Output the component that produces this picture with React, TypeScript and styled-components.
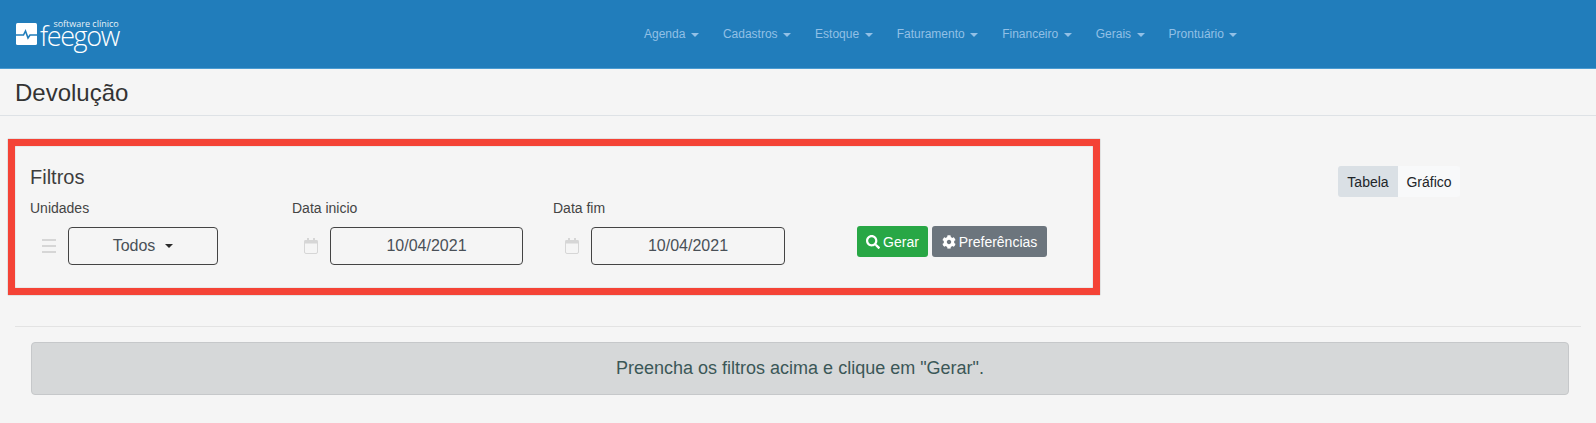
import React from "react";
import styled, { createGlobalStyle } from "styled-components";
import { FaSearch, FaCog } from "react-icons/fa";

const Global = createGlobalStyle`
  html, body { margin: 0; padding: 0; background: #f5f5f5; }
  body { font-family: "Liberation Sans", Arial, sans-serif; color: #333; overflow: hidden; }
  * { box-sizing: border-box; }
`;

const Page = styled.div`
  width: 1596px;
  height: 423px;
  background: #f5f5f5;
`;

const Header = styled.header`
  height: 69px;
  background: #217dbb;
  border-bottom: 1px solid #4a9bd1;
  display: flex;
  align-items: flex-start;
`;

const Logo = styled.div`
  width: 120px;
  margin: 18px 0 0 16px;
  display: flex;
  align-items: flex-start;
  color: #fff;
`;

const LogoWords = styled.div`
  margin: 2px 0 0 3px;
  display: flex;
  flex-direction: column;
  align-items: flex-end;
`;

const LogoTop = styled.span`
  font-family: "Open Sans", sans-serif;
  font-size: 9px;
  line-height: 8px;
  height: 8px;
  color: #e6f1f8;
  white-space: nowrap;
`;

const LogoName = styled.span`
  font-family: "Open Sans", sans-serif;
  font-weight: 300;
  font-size: 27px;
  line-height: 22px;
  height: 22px;
  margin-top: -3px;
  letter-spacing: -1.4px;
`;

const Nav = styled.nav`
  display: flex;
  margin-left: 496px;
  margin-top: 27px;
`;

const NavLink = styled.a`
  padding: 0 12px;
  font-size: 12px;
  line-height: 15px;
  color: #92c0e6;
  white-space: nowrap;
  display: flex;
  align-items: center;
`;

const Caret = styled.span<{ $size?: number; $gap?: number }>`
  display: inline-block;
  margin-left: ${(p) => p.$gap ?? 5.5}px;
  border-top: ${(p) => p.$size ?? 4}px solid currentColor;
  border-left: ${(p) => p.$size ?? 4}px solid transparent;
  border-right: ${(p) => p.$size ?? 4}px solid transparent;
`;

const SelectCaret = styled(Caret)`
  color: #2b2b2b;
`;

const TitleBar = styled.div`
  height: 47px;
  border-bottom: 1px solid #dee2e6;
  padding: 1px 0 0 15px;
  display: flex;
  align-items: center;
`;

const Title = styled.h1`
  margin: 0;
  font-weight: 400;
  font-size: 24px;
  line-height: 45px;
  color: #333;
`;

const Main = styled.main`
  padding: 23px 15px 0 8px;
`;

const TopRow = styled.div`
  display: flex;
  align-items: flex-start;
`;

const FilterBox = styled.section`
  width: 1092px;
  height: 156px;
  border: 7px solid #f44336;
  box-shadow: 0 0 1px #8a8a8a, inset 0 0 1px #777;
  padding: 19px 15px 0;
`;

const FilterTitle = styled.h5`
  margin: 0 0 11px;
  font-size: 20px;
  font-weight: 400;
  line-height: 24px;
  color: #3d3d3d;
`;

const Fields = styled.div`
  display: flex;
`;

const Field = styled.div<{ $w: number }>`
  width: ${(p) => p.$w}px;
`;

const Label = styled.label`
  display: block;
  font-size: 14px;
  line-height: 16px;
  color: #444;
  margin-bottom: 11px;
`;

const InputRow = styled.div`
  display: flex;
  align-items: center;
`;

const AddOn = styled.div`
  width: 38px;
  display: flex;
  justify-content: center;
`;

const Control = styled.div<{ $w: number }>`
  width: ${(p) => p.$w}px;
  height: 38px;
  border: 1px solid #444;
  border-radius: 4px;
  font-size: 16px;
  color: #495057;
  display: flex;
  align-items: center;
  justify-content: center;
`;

const Actions = styled.div`
  display: flex;
  gap: 4px;
  margin-left: 43px;
  margin-top: 26px;
`;

const Btn = styled.button<{ $bg: string; $w: number }>`
  width: ${(p) => p.$w}px;
  height: 31px;
  border: 0;
  border-radius: 3px;
  background: ${(p) => p.$bg};
  color: #fff;
  font-family: inherit;
  font-size: 14px;
  padding: 0;
  display: flex;
  align-items: center;
  justify-content: center;
  gap: 3px;
`;

const Toggle = styled.div`
  display: flex;
  margin-left: 238px;
  margin-top: 27px;
  height: 31px;
  font-size: 14px;
`;

const ToggleItem = styled.div<{ $on?: boolean; $w: number }>`
  width: ${(p) => p.$w}px;
  background: ${(p) => (p.$on ? "#dae0e5" : "#f8f9fa")};
  border-radius: ${(p) => (p.$on ? "3px 0 0 3px" : "0 3px 3px 0")};
  color: #212529;
  display: flex;
  align-items: center;
  justify-content: center;
`;

const Divider = styled.hr`
  margin: 31px 0 0 7px;
  border: 0;
  border-top: 1px solid #e3e3e3;
`;

const Alert = styled.div`
  margin: 15px 12px 0 23px;
  height: 53px;
  background: #d6d8d9;
  border: 1px solid #c6c8ca;
  border-radius: 4px;
  color: #3b5757;
  font-size: 18px;
  display: flex;
  align-items: center;
  justify-content: center;
`;

const nav = ["Agenda", "Cadastros", "Estoque", "Faturamento", "Financeiro", "Gerais", "Prontuário"];

const Calendar = () => (
  <svg width="14" height="16" viewBox="0 0 14 16" fill="none">
    <rect x="0.5" y="2.5" width="13" height="13" rx="1.5" stroke="#d6d6d6" />
    <rect x="0.5" y="2" width="13" height="3.5" fill="#d6d6d6" />
    <rect x="3" y="0" width="2" height="3" fill="#d6d6d6" />
    <rect x="9" y="0" width="2" height="3" fill="#d6d6d6" />
  </svg>
);

const Bars = () => (
  <svg width="14" height="14" viewBox="0 0 14 14">
    <rect x="0" y="0" width="14" height="2" fill="#d6d6d6" />
    <rect x="0" y="6" width="14" height="2" fill="#d6d6d6" />
    <rect x="0" y="12" width="14" height="2" fill="#d6d6d6" />
  </svg>
);

const LogoMark = () => (
  <svg width="21" height="22" viewBox="0 0 21 22" style={{ marginTop: 5 }}>
    <rect width="21" height="22" rx="1.5" fill="#fff" />
    <path d="M0 12h7.5l2-4 2.5 7 2-3H21" fill="none" stroke="#217dbb" strokeWidth="1.6" />
  </svg>
);

export default function App() {
  return (
    <Page>
      <Global />
      <Header>
        <Logo>
          <LogoMark />
          <LogoWords>
            <LogoTop>software clínico</LogoTop>
            <LogoName>feegow</LogoName>
          </LogoWords>
        </Logo>
        <Nav>
          {nav.map((n) => (
            <NavLink key={n}>
              {n}
              <Caret />
            </NavLink>
          ))}
        </Nav>
      </Header>
      <TitleBar>
        <Title>Devolução</Title>
      </TitleBar>
      <Main>
        <TopRow>
          <FilterBox>
            <FilterTitle>Filtros</FilterTitle>
            <Fields>
              <Field $w={262}>
                <Label>Unidades</Label>
                <InputRow>
                  <AddOn>
                    <Bars />
                  </AddOn>
                  <Control $w={150}>
                    Todos
                    <SelectCaret $size={4.8} $gap={10} />
                  </Control>
                </InputRow>
              </Field>
              <Field $w={261}>
                <Label>Data inicio</Label>
                <InputRow>
                  <AddOn>
                    <Calendar />
                  </AddOn>
                  <Control $w={193}>10/04/2021</Control>
                </InputRow>
              </Field>
              <Field $w={261}>
                <Label>Data fim</Label>
                <InputRow>
                  <AddOn>
                    <Calendar />
                  </AddOn>
                  <Control $w={194}>10/04/2021</Control>
                </InputRow>
              </Field>
              <Actions>
                <Btn $bg="#28a745" $w={71}>
                  <FaSearch size={14} />
                  Gerar
                </Btn>
                <Btn $bg="#6c757d" $w={115}>
                  <FaCog size={14} />
                  Preferências
                </Btn>
              </Actions>
            </Fields>
          </FilterBox>
          <Toggle>
            <ToggleItem $on $w={60}>Tabela</ToggleItem>
            <ToggleItem $w={62}>Gráfico</ToggleItem>
          </Toggle>
        </TopRow>
        <Divider />
        <Alert>Preencha os filtros acima e clique em "Gerar".</Alert>
      </Main>
    </Page>
  );
}
